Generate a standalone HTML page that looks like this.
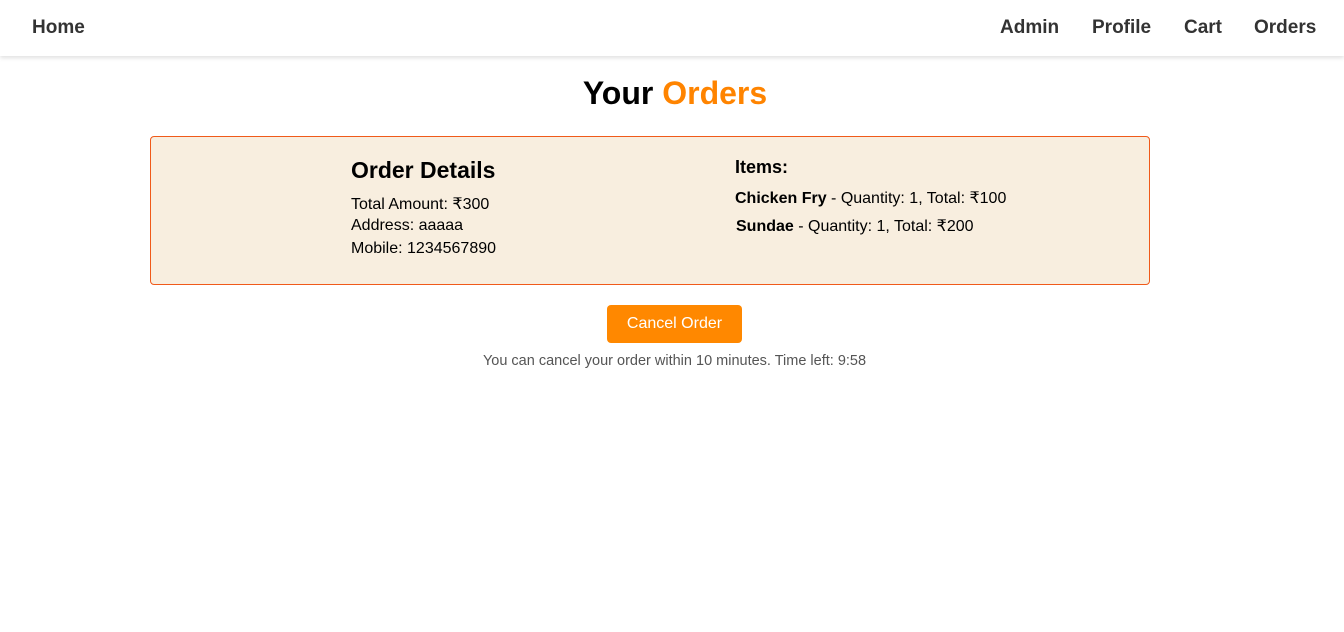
<!DOCTYPE html>
<html><head><meta charset="utf-8"><style>
*{margin:0;padding:0;box-sizing:border-box}
body{width:1344px;height:632px;background:#fff;font-family:"Liberation Sans",Arial,sans-serif;position:relative;overflow:hidden;color:#000}
.nav{position:absolute;left:0;top:0;width:1344px;height:56px;background:#fff;box-shadow:0 2px 4px rgba(0,0,0,.12)}
.nav a{position:absolute;top:17px;font-size:19px;font-weight:bold;color:#333;text-decoration:none}
h1{position:absolute;top:75px;left:3px;width:1344px;text-align:center;font-size:32px;font-weight:bold}
h1 span{color:#ff8400}
.box{position:absolute;left:150px;top:136px;width:1000px;height:149px;background:#f8eedf;border:1px solid #f05a1a;border-radius:4px}
.t{position:absolute;white-space:nowrap;font-size:16px}
.btn{position:absolute;left:607px;top:305px;width:135px;height:38px;background:#ff8800;border-radius:4px;color:#fff;font-size:16px;text-align:center;line-height:38px}
.note{position:absolute;top:353px;left:0;width:1349px;text-align:center;font-size:14.5px;color:#555}
</style></head><body>
<div class="nav">
<a style="left:32px">Home</a>
<a style="left:1000px">Admin</a>
<a style="left:1092px">Profile</a>
<a style="left:1184px">Cart</a>
<a style="left:1254px">Orders</a>
</div>
<h1>Your <span>Orders</span></h1>
<div class="box"></div>
<div class="t" style="left:351px;top:157px;font-size:23px;font-weight:bold">Order Details</div>
<div class="t" style="left:351px;top:194px">Total Amount: ₹300</div>
<div class="t" style="left:351px;top:217px">Address: aaaaa</div>
<div class="t" style="left:351px;top:240px">Mobile: 1234567890</div>
<div class="t" style="left:735px;top:157px;font-size:18px;font-weight:bold">Items:</div>
<div class="t" style="left:735px;top:188px"><b>Chicken Fry</b> - Quantity: 1, Total: ₹100</div>
<div class="t" style="left:736px;top:216px"><b>Sundae</b> - Quantity: 1, Total: ₹200</div>
<div class="btn">Cancel Order</div>
<div class="note">You can cancel your order within 10 minutes. Time left: 9:58</div>
</body></html>
